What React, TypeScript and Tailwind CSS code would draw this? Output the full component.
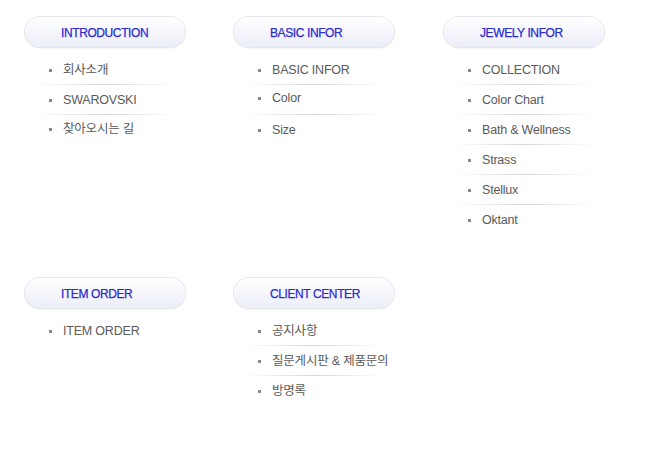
import React from "react";

type Item = { label: string; cls?: string };
type Section = { title: string; items: Item[] };

const sections: Section[] = [
  {
    title: "INTRODUCTION",
    items: [{ label: "회사소개" }, { label: "SWAROVSKI" }, { label: "찾아오시는 길", cls: "-translate-y-[1px]" }],
  },
  {
    title: "BASIC INFOR",
    items: [{ label: "BASIC INFOR" }, { label: "Color", cls: "-translate-y-[2px]" }, { label: "Size" }],
  },
  {
    title: "JEWELY INFOR",
    items: [
      { label: "COLLECTION" },
      { label: "Color Chart" },
      { label: "Bath & Wellness" },
      { label: "Strass" },
      { label: "Stellux" },
      { label: "Oktant" },
    ],
  },
  { title: "ITEM ORDER", items: [{ label: "ITEM ORDER" }] },
  {
    title: "CLIENT CENTER",
    items: [{ label: "공지사항" }, { label: "질문게시판 & 제품문의" }, { label: "방명록" }],
  },
];

function Column({ s }: { s: Section }) {
  return (
    <div className="flex flex-col w-[161px]">
      <div className="h-[30px] w-[160px] rounded-full bg-gradient-to-b from-[#ffffff] to-[#eceef8] shadow-[0_0_0_1px_#e6e7ee,0_1px_2px_rgba(0,0,0,0.12)] flex items-center pl-[36px] pt-[2px]">
        <span className="text-[12px] tracking-[-0.4px] text-[#2b2bcf] leading-none [-webkit-text-stroke:0.25px_#2b2bcf]">
          {s.title}
        </span>
      </div>
      <div className="mt-[8px] flex flex-col">
        {s.items.map((it, i) => (
          <React.Fragment key={i}>
            {i > 0 && (
              <div className="h-px ml-[10px] w-[141px] bg-gradient-to-r from-transparent via-[#d6d6d6] to-transparent" />
            )}
            <div className={`h-[29px] pt-[2px] flex items-center ${it.cls ?? ""}`}>
              <span className="ml-[24px] w-[3px] h-[3px] bg-[#888]" />
              <span className="ml-[11px] text-[12.5px] tracking-[-0.2px] text-[#5a5a5a]">{it.label}</span>
            </div>
          </React.Fragment>
        ))}
      </div>
    </div>
  );
}

export default function App() {
  return (
    <div
      className="w-[655px] h-[462px] bg-white pl-[25px] pt-[17px]"
      style={{ fontFamily: '"Liberation Sans", "Noto Sans CJK KR", Arial, sans-serif' }}
    >
      <div className="grid grid-cols-[209px_210px_161px] gap-y-[44px] items-start">
        {sections.map((s, i) => (
          <Column key={i} s={s} />
        ))}
      </div>
    </div>
  );
}
